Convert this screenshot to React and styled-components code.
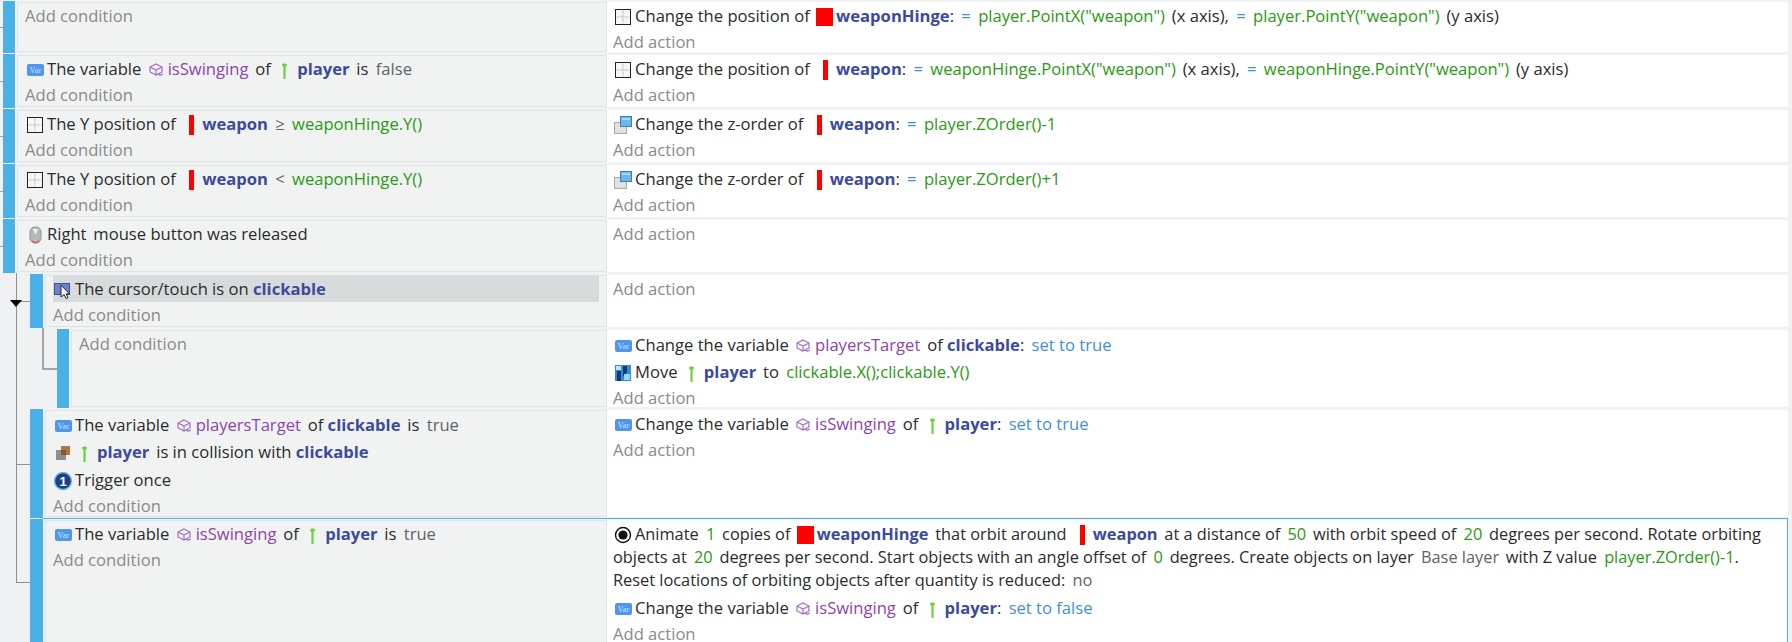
import React from "react";
import styled, { createGlobalStyle } from "styled-components";

const Global = createGlobalStyle`
  html, body { margin: 0; padding: 0; background: #f0f1f3; overflow: hidden; }
  #root { height: 642px; overflow: hidden; }
`;

const Sheet = styled.div`
  position: relative;
  width: 1788px;
  padding-top: 1px;
  font-family: "Open Sans", "Noto Sans", sans-serif;
  font-size: 16.6px;
  color: #2b2b2b;
`;

const Row = styled.div`
  position: relative;
  display: grid;
  grid-template-columns: 607px 1fr;
  grid-template-rows: 100%;
  height: ${(p) => p.$h}px;
  margin-bottom: 1px;
  ${(p) =>
    p.$selected &&
    `&::before {
      content: "";
      position: absolute;
      top: -1px;
      left: 43px;
      right: 0;
      bottom: 0;
      border-top: 1px solid #4ab0e6;
      border-right: 1px solid #4ab0e6;
      pointer-events: none;
    }`}
`;

const CondSide = styled.div`
  display: flex;
  min-width: 0;
  min-height: 0;
  padding-left: ${(p) => 3 + p.$level * 27}px;
`;

const Bar = styled.div`
  flex: none;
  width: ${(p) => (p.$level === 1 ? 13 : 12)}px;
  background: #4ab0e6;
`;

const CondPanel = styled.div`
  flex: 1;
  min-width: 0;
  margin: 1px 0 1px 2px;
  padding: 0 7px;
  border: 1px solid #dfe3e3;
  background: #f1f3f3;
`;

const ActionPanel = styled.div`
  min-height: 0;
  margin: 1px 0;
  padding: 1px 6px 0;
  background: #ffffff;
`;

const Line = styled.div`
  min-height: ${(p) => p.$h || 26}px;
  line-height: ${(p) => p.$h || 26}px;
  white-space: nowrap;
  ${(p) => p.$active && "background: #d8dbdb;"}
`;

const Para = styled.div`
  padding-top: 2px;
  margin-bottom: 3px;
  font-size: 16.35px;
  line-height: 23px;
  white-space: nowrap;
`;

const AddLink = styled.div`
  height: 26px;
  line-height: 26px;
  color: #8a8a8a;
`;

const Obj = styled.span`
  font-weight: 700;
  color: #3c4a9e;
`;
const Tx = styled.span`
  margin-left: 2.5px;
`;
const Expr = styled.span`
  margin-left: 3px;
  color: #2a9a12;
`;
const Var = styled.span`
  color: #8e44ad;
`;
const Val = styled.span`
  margin-left: 3px;
  color: #3f8fdc;
`;
const Dim = styled.span`
  margin-left: 3px;
  color: #5f6368;
`;

const Glyph = styled.svg`
  display: inline-block;
  width: 20px;
  height: 20px;
  margin-right: 2px;
  vertical-align: -5px;
`;

const Tree = styled.svg`
  position: absolute;
  top: 0;
  left: 0;
  pointer-events: none;
`;

const VarIcon = () => (
  <Glyph viewBox="0 0 20 20">
    <rect x="2" y="4" width="17" height="12" rx="2" fill="#4f97ee" />
    <text x="10.5" y="13" fontSize="8.5" fontFamily="Liberation Serif, serif" textAnchor="middle" fill="#cfe3fb">Var</text>
  </Glyph>
);
const PosIcon = () => (
  <Glyph viewBox="0 0 20 20">
    <rect x="2.5" y="2.5" width="15" height="15" fill="#f6f6f6" stroke="#222" />
    <path d="M10 3.5v13M3.5 10h13" stroke="#bdbdbd" strokeDasharray="3 1" />
  </Glyph>
);
const ZIcon = () => (
  <Glyph viewBox="0 0 20 20">
    <rect x="1.5" y="7.5" width="12" height="11" fill="#e2e2e2" stroke="#a8a8a8" />
    <rect x="7.5" y="1.5" width="11" height="10" fill="#6ab6ee" stroke="#3f7fb8" />
    <rect x="9" y="3" width="8" height="2" fill="#a6d6f6" />
  </Glyph>
);
const MouseIcon = () => (
  <Glyph viewBox="0 0 20 20">
    <rect x="5" y="2" width="11" height="16" rx="5" fill="#b4b8bb" stroke="#8e9294" />
    <path d="M8 4l2.5 6 2.5-6" fill="#f2f2f2" />
    <path d="M7 16c2 2 5 2 7 0" stroke="#e2584c" strokeWidth="1.6" fill="none" />
  </Glyph>
);
const CursorIcon = () => (
  <Glyph viewBox="0 0 20 20">
    <rect x="1.5" y="3.5" width="15" height="11" fill="#6c82cf" stroke="#3c5199" />
    <path d="M8 5v12l3-2.5 2 4 2-1-2-3.6h3.5z" fill="#fff" stroke="#222" strokeWidth="1" />
  </Glyph>
);
const MoveIcon = () => (
  <Glyph viewBox="0 0 20 20">
    <rect x="2" y="2" width="16" height="16" fill="#2f8fd0" />
    <path d="M4 18V8h4v10zM10 14V3h4v6" fill="#16387f" />
    <rect x="11" y="11" width="6" height="6" fill="#9cd2f2" />
    <rect x="3" y="3" width="5" height="4" fill="#c4e3f6" />
  </Glyph>
);
const TriggerIcon = () => (
  <Glyph viewBox="0 0 20 20">
    <circle cx="10" cy="10" r="8.5" fill="#1f3f86" stroke="#6bb8e8" strokeWidth="1.4" />
    <text x="10" y="14.5" fontSize="13" fontWeight="700" fontFamily="Liberation Sans, sans-serif" textAnchor="middle" fill="#fff">1</text>
  </Glyph>
);
const CollisionIcon = () => (
  <Glyph viewBox="0 0 20 20">
    <rect x="8" y="3" width="9" height="9" fill="#b5763d" />
    <rect x="3" y="7" width="10" height="10" fill="#8f8f8f" />
    <rect x="8" y="7" width="5" height="5" fill="#7a5a40" />
  </Glyph>
);
const RadioIcon = () => (
  <Glyph viewBox="0 0 20 20">
    <circle cx="10" cy="10" r="7.5" fill="#fff" stroke="#111" strokeWidth="1.4" />
    <circle cx="10" cy="10" r="4.6" fill="#111" />
  </Glyph>
);
const VarSym = () => (
  <Glyph viewBox="0 0 20 20">
    <path d="M10 4l6 3v5l-6 3-6-3V7zM4 7l6 3 6-3M10 10v5" fill="none" stroke="#a56cc0" strokeWidth="1.2" />
    <path d="M12 15c1-2 2 1 3 0s1-1 2-1" fill="none" stroke="#a56cc0" strokeWidth="1.2" />
  </Glyph>
);
const Player = () => (
  <Glyph viewBox="0 0 20 20">
    <path d="M7 4.5c0-1.5 5-1.5 5 0 0 1.5-1 2-1.4 2.5L10.6 19H8.4L8.4 7C8 6.5 7 6 7 4.5z" fill="#6fd13f" />
  </Glyph>
);
const Weapon = () => (
  <Glyph viewBox="0 0 20 20">
    <rect x="9" y="0" width="5" height="20" fill="#ff0000" />
  </Glyph>
);
const Hinge = () => (
  <Glyph viewBox="0 0 20 20">
    <rect x="2" y="1" width="17" height="18" fill="#ff0000" />
  </Glyph>
);

const PlayerRef = () => (<><Player /><Obj>player</Obj></>);
const WeaponRef = () => (<><Weapon /><Obj>weapon</Obj></>);
const HingeRef = () => (<><Hinge /><Obj>weaponHinge</Obj></>);
const Eq = () => <Val>=</Val>;

const EventRow = ({ h, level = 0, selected, cond, act }) => (
  <Row $h={h} $selected={selected}>
    <CondSide $level={level}>
      <Bar $level={level} />
      <CondPanel>
        {cond}
        <AddLink>Add condition</AddLink>
      </CondPanel>
    </CondSide>
    <ActionPanel>
      {act}
      <AddLink>Add action</AddLink>
    </ActionPanel>
  </Row>
);

export default function App() {
  return (
    <>
      <Global />
      <Sheet>
        <EventRow
          h={52}
          act={<Line><PosIcon />Change the position of <HingeRef />: <Eq /> <Expr>player.PointX("weapon")</Expr> <Tx>(x axis),</Tx> <Eq /> <Expr>player.PointY("weapon")</Expr> <Tx>(y axis)</Tx></Line>}
        />
        <EventRow
          h={54}
          cond={<Line><VarIcon />The variable <VarSym /><Var>isSwinging</Var> <Tx>of</Tx> <PlayerRef /> <Tx>is</Tx> <Dim>false</Dim></Line>}
          act={<Line><PosIcon />Change the position of <WeaponRef />: <Eq /> <Expr>weaponHinge.PointX("weapon")</Expr> <Tx>(x axis),</Tx> <Eq /> <Expr>weaponHinge.PointY("weapon")</Expr> <Tx>(y axis)</Tx></Line>}
        />
        <EventRow
          h={54}
          cond={<Line><PosIcon />The Y position of <WeaponRef /> <Dim>≥</Dim> <Expr>weaponHinge.Y()</Expr></Line>}
          act={<Line><ZIcon />Change the z-order of <WeaponRef />: <Eq /> <Expr>player.ZOrder()-1</Expr></Line>}
        />
        <EventRow
          h={54}
          cond={<Line><PosIcon />The Y position of <WeaponRef /> <Dim>&lt;</Dim> <Expr>weaponHinge.Y()</Expr></Line>}
          act={<Line><ZIcon />Change the z-order of <WeaponRef />: <Eq /> <Expr>player.ZOrder()+1</Expr></Line>}
        />
        <EventRow
          h={54}
          cond={<Line><MouseIcon />Right <Tx>mouse button was released</Tx></Line>}
        />
        <EventRow
          h={54}
          level={1}
          cond={<Line $active><CursorIcon />The cursor/touch is on <Obj>clickable</Obj></Line>}
        />
        <EventRow
          h={79}
          level={2}
          act={
            <>
              <Line $h={27}><VarIcon />Change the variable <VarSym /><Var>playersTarget</Var> <Tx>of</Tx> <Obj>clickable</Obj>: <Val>set to true</Val></Line>
              <Line $h={27}><MoveIcon />Move <PlayerRef /> <Tx>to</Tx> <Expr>clickable.X();clickable.Y()</Expr></Line>
            </>
          }
        />
        <EventRow
          h={109}
          level={1}
          cond={
            <>
              <Line $h={27}><VarIcon />The variable <VarSym /><Var>playersTarget</Var> <Tx>of</Tx> <Obj>clickable</Obj> <Tx>is</Tx> <Dim>true</Dim></Line>
              <Line $h={28}><CollisionIcon /><PlayerRef /> <Tx>is in collision with</Tx> <Obj>clickable</Obj></Line>
              <Line $h={27}><TriggerIcon />Trigger once</Line>
            </>
          }
          act={<Line><VarIcon />Change the variable <VarSym /><Var>isSwinging</Var> <Tx>of</Tx> <PlayerRef />: <Val>set to true</Val></Line>}
        />
        <EventRow
          h={126}
          level={1}
          selected
          cond={<Line><VarIcon />The variable <VarSym /><Var>isSwinging</Var> <Tx>of</Tx> <PlayerRef /> <Tx>is</Tx> <Dim>true</Dim></Line>}
          act={
            <>
              <Para>
                <RadioIcon />Animate <Expr>1</Expr> <Tx>copies of</Tx> <HingeRef /> <Tx>that orbit around</Tx> <WeaponRef /> <Tx>at a distance of</Tx> <Expr>50</Expr> <Tx>with orbit speed of</Tx> <Expr>20</Expr> <Tx>degrees per second. Rotate orbiting</Tx>
                <br />
                objects at <Expr>20</Expr> <Tx>degrees per second. Start objects with an angle offset of</Tx> <Expr>0</Expr> <Tx>degrees. Create objects on layer</Tx> <Dim>Base layer</Dim> <Tx>with Z value</Tx> <Expr>player.ZOrder()-1</Expr>.
                <br />
                Reset locations of orbiting objects after quantity is reduced: <Dim>no</Dim>
              </Para>
              <Line><VarIcon />Change the variable <VarSym /><Var>isSwinging</Var> <Tx>of</Tx> <PlayerRef />: <Val>set to false</Val></Line>
            </>
          }
        />
        <Tree width="100" height="642" viewBox="0 0 100 642" shapeRendering="crispEdges">
          <path d="M0 27h3M0 81h3M0 136h3M0 191h3M0 246h3" stroke="#a0a0a0" />
          <path d="M16.5 273V582.5H30M16.5 301.5H30M16.5 464.5H30" fill="none" stroke="#909090" />
          <path d="M43 328V368.5H57" fill="none" stroke="#a4a4a4" strokeWidth="2" />
          <path d="M10 300h12l-6 7z" fill="#000" shapeRendering="auto" />
        </Tree>
      </Sheet>
    </>
  );
}
